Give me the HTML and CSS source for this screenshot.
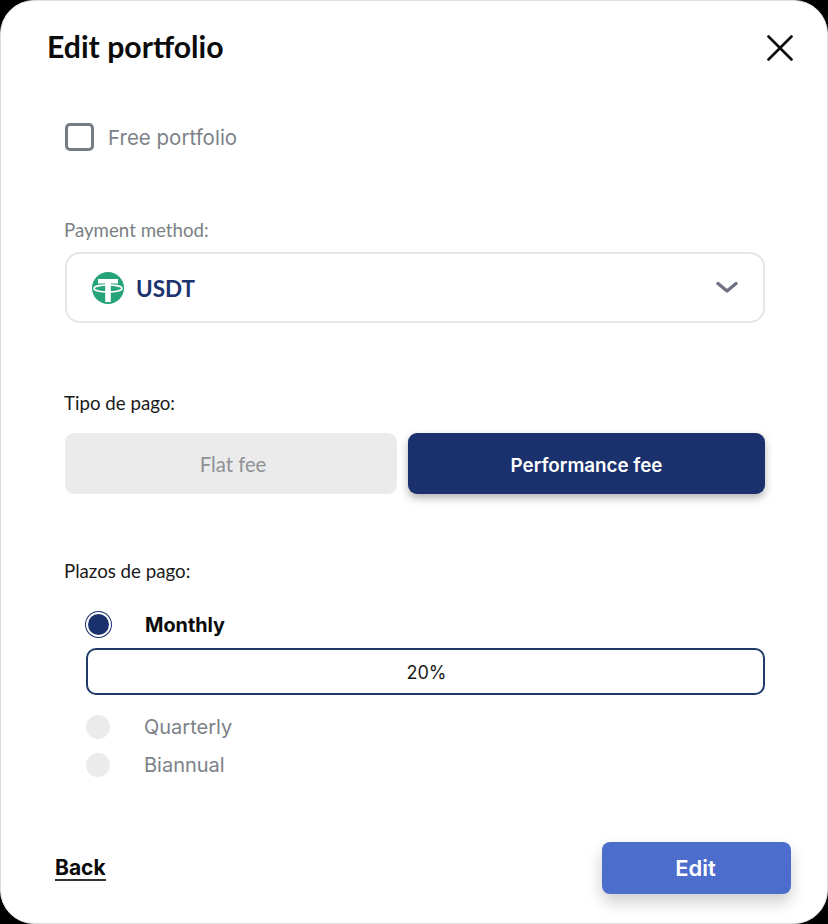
FILE: index.html
```html
<!DOCTYPE html>
<html lang="en">
<head>
    <meta charset="UTF-8">
    <meta name="viewport" content="width=device-width, initial-scale=1.0">
    <title>Edit portfolio</title>
    <link rel="stylesheet" href="styles.css">
</head>
<body>
    <div class="modal">
        <div class="modal-header">
            <h1>Edit portfolio</h1>
            <button class="close-button" aria-label="Close">
                <svg width="26" height="26" viewBox="0 0 26 26"><path d="M1.5 1.5L24.5 24.5M24.5 1.5L1.5 24.5" stroke="#0a0a0a" stroke-width="2.6" stroke-linecap="round" fill="none"/></svg>
            </button>
        </div>

        <div class="modal-body">
            <label class="free-row">
                <span class="checkbox"></span>
                <span class="free-text">Free portfolio</span>
            </label>

            <div class="field-label muted">Payment method:</div>
            <div class="select-box">
                <svg class="coin" width="32" height="32" viewBox="0 0 32 32">
                    <circle cx="16" cy="16" r="16" fill="#27a37a"/>
                    <path d="M6 7H26V11.5H18.8V30H13.2V11.5H6Z" fill="#fff"/>
                    <ellipse cx="16" cy="16.5" rx="14" ry="3.4" fill="none" stroke="#fff" stroke-width="1.5"/>
                </svg>
                <span class="coin-name">USDT</span>
                <svg class="chevron" width="22" height="13" viewBox="0 0 22 13"><path d="M2 2.5L11 10L20 2.5" stroke="#6f7283" stroke-width="3.4" stroke-linecap="round" stroke-linejoin="round" fill="none"/></svg>
            </div>

            <div class="field-label type-label">Tipo de pago:</div>
            <div class="fee-buttons">
                <button class="fee-button flat">Flat fee</button>
                <button class="fee-button performance">Performance fee</button>
            </div>

            <div class="field-label terms-label">Plazos de pago:</div>
            <div class="terms">
                <div class="term term-active">
                    <span class="radio radio-on"></span>
                    <span class="term-name">Monthly</span>
                </div>
                <div class="percent-input">20%</div>
                <div class="term term-off">
                    <span class="radio"></span>
                    <span class="term-name">Quarterly</span>
                </div>
                <div class="term term-off term-last">
                    <span class="radio"></span>
                    <span class="term-name">Biannual</span>
                </div>
            </div>
        </div>

        <div class="modal-footer">
            <a class="back-link" href="#">Back</a>
            <button class="edit-button">Edit</button>
        </div>
    </div>
</body>
</html>
```

FILE: styles.css
```css
html, body {
    margin: 0;
    height: 100%;
}
body {
    background-color: #000;
    font-family: "Inter", sans-serif;
    color: #111;
}
button {
    border: none;
    cursor: pointer;
    font-family: inherit;
}
.modal {
    box-sizing: border-box;
    width: 828px;
    height: 924px;
    background-color: #fff;
    border: 1px solid #dedede;
    border-radius: 34px;
    display: flex;
    flex-direction: column;
    overflow: hidden;
}
.modal-header {
    display: flex;
    justify-content: space-between;
    align-items: flex-start;
    padding: 27px 34px 0 46px;
    height: 40px;
}
h1 {
    margin: 0;
    font-family: "Lato", sans-serif;
    font-size: 30.2px;
    font-weight: 700;
    line-height: 36px;
    color: #0b0b0b;
}
.close-button {
    background: none;
    padding: 0;
    margin-top: 7px;
    width: 26px;
    height: 26px;
}
.modal-body {
    flex: 1;
    padding: 55px 62px 0 64px;
}
.free-row {
    display: flex;
    align-items: center;
    gap: 14px;
    height: 28px;
}
.checkbox {
    box-sizing: border-box;
    width: 29px;
    height: 28px;
    border: 3px solid #767c84;
    border-radius: 5px;
}
.free-text {
    font-size: 20.5px;
    color: #7d8289;
}
.field-label {
    margin-left: -1px;
    font-family: "Lato", sans-serif;
    font-size: 18.7px;
    line-height: 22px;
    color: #1a1a1a;
}
.muted {
    color: #7b7f85;
    margin-top: 68px;
}
.select-box {
    box-sizing: border-box;
    height: 71px;
    margin-top: 11px;
    border: 2px solid #e6e6e8;
    border-radius: 15px;
    display: flex;
    align-items: center;
    padding: 0 25px;
}
.coin {
    flex: none;
}
.coin-name {
    font-family: "Lato", sans-serif;
    font-size: 22.5px;
    font-weight: 700;
    color: #1c3370;
    margin-left: 12px;
    padding-top: 2px;
}
.chevron {
    margin-left: auto;
}
.type-label {
    margin-top: 69px;
}
.fee-buttons {
    display: flex;
    gap: 11px;
    margin-top: 19px;
}
.fee-button {
    height: 61px;
    border-radius: 9px;
}
.flat {
    width: 332px;
    padding: 0 0 0 4px;
    background-color: #ebebeb;
    color: #8e9196;
    font-family: "Lato", sans-serif;
    font-size: 20.3px;
}
.performance {
    flex: 1;
    padding: 4px 0 0;
    background-color: #1b316e;
    color: #fff;
    font-size: 18.8px;
    font-weight: 600;
    box-shadow: 0 4px 8px rgba(0, 0, 0, 0.3);
}
.terms-label {
    margin-top: 66px;
}
.terms {
    padding-left: 21px;
    margin-top: 30px;
}
.term {
    display: flex;
    align-items: center;
    font-size: 20px;
}
.term-active {
    height: 25px;
    font-size: 19.8px;
    font-weight: 700;
    color: #0c0c0c;
}
.term-active .term-name {
    margin-left: 34px;
}
.radio {
    box-sizing: border-box;
    width: 24px;
    height: 24px;
    border-radius: 50%;
    background-color: #ebebeb;
    flex: none;
}
.radio-on {
    width: 25px;
    height: 25px;
    background-color: #1b316e;
    border: 2px solid #fff;
    box-shadow: 0 0 0 1px #1b316e;
}
.percent-input {
    box-sizing: border-box;
    height: 47px;
    margin-top: 11px;
    padding: 2px 0 0 2px;
    border: 2px solid #1f3a68;
    border-radius: 10px;
    display: flex;
    align-items: center;
    justify-content: center;
    font-size: 18px;
    color: #1a1a1a;
}
.term-off {
    color: #7d8289;
    height: 24px;
    margin-top: 20px;
}
.term-last {
    margin-top: 14px;
}
.term-off .term-name {
    margin-left: 34px;
}
.modal-footer {
    display: flex;
    justify-content: space-between;
    align-items: center;
    padding: 0 36px 29px 54px;
}
.back-link {
    font-size: 21px;
    font-weight: 700;
    color: #0a0a0a;
    text-decoration: none;
    border-bottom: 2px solid #333;
    line-height: 22px;
    margin-top: 2px;
}
.edit-button {
    width: 189px;
    height: 52px;
    padding: 0 2px 0 0;
    background-color: #4c6dcb;
    color: #fff;
    font-size: 22px;
    font-weight: 600;
    border-radius: 8px;
    box-shadow: 0 8px 16px rgba(0, 0, 0, 0.2);
}
```
